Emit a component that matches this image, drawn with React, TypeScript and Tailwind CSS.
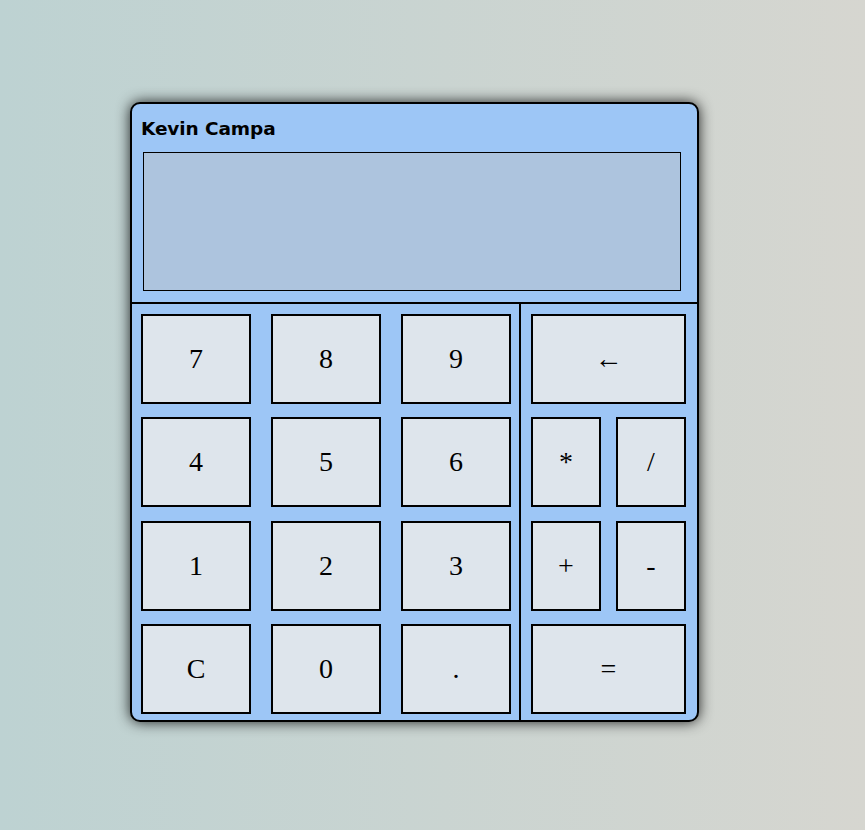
const leftKeys = ['7', '8', '9', '4', '5', '6', '1', '2', '3', 'C', '0', '.'];

function Key({ label, wide }: { label: string; wide?: boolean }) {
  return (
    <button
      className={`h-[90px] ${wide ? 'col-span-2' : ''} border-2 border-black bg-[#dee5ec] text-[28px] text-black flex items-center justify-center`}
    >
      <span className="font-['Liberation_Serif',serif] leading-none">{label}</span>
    </button>
  );
}

export default function App() {
  return (
    <div className="min-h-screen w-full bg-gradient-to-r from-[#bdd2d2] to-[#d6d6d0] pt-[102px] pl-[130px]">
      <div className="w-[569px] border-2 border-black rounded-[10px] bg-[#9dc6f6] shadow-[0_0_14px_rgba(0,0,0,0.85)] overflow-hidden">
        <header className="pt-[13px] pb-[11px]">
          <h1 className="pl-[9px] text-[18.5px] leading-[24px] font-bold text-black font-['DejaVu_Sans',sans-serif] tracking-[-0.1px]">
            Kevin Campa
          </h1>
          <div className="mt-[11px] ml-[11px] w-[538px] h-[139px] border border-black bg-[#adc4de]" />
        </header>
        <div className="flex border-t-2 border-black">
          <div className="w-[389px] border-r-2 border-black pl-[9px] pr-[10px] pt-[10px] pb-[6px]">
            <div className="grid grid-cols-[110px_110px_110px] gap-x-[20px] gap-y-[13.4px]">
              {leftKeys.map((k) => (
                <Key key={k} label={k} />
              ))}
            </div>
          </div>
          <div className="flex-1 px-[10px] pt-[10px] pb-[6px]">
            <div className="grid grid-cols-[70px_70px] gap-x-[15px] gap-y-[13.4px]">
              <Key label="←" wide />
              <Key label="*" />
              <Key label="/" />
              <Key label="+" />
              <Key label="-" />
              <Key label="=" wide />
            </div>
          </div>
        </div>
      </div>
    </div>
  );
}
